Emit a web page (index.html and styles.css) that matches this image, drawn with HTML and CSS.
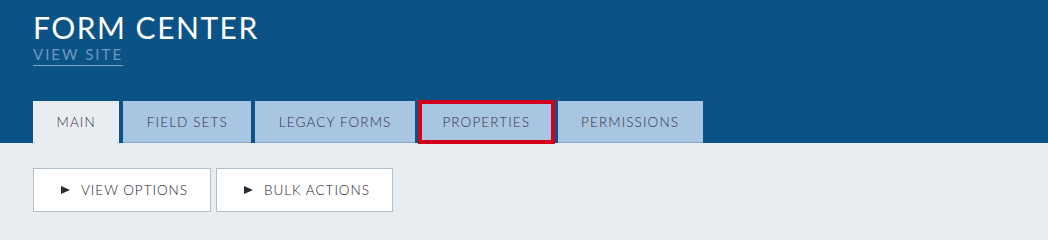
FILE: index.html
```html
<!DOCTYPE html>
<html>
<head>
<meta charset="utf-8">
<link rel="stylesheet" href="styles.css">
</head>
<body>
<header class="masthead">
  <h1 class="title">FORM CENTER</h1>
  <a class="view-site" href="#">VIEW SITE</a>
  <nav class="tabs">
    <a class="tab tab-active" href="#">MAIN</a>
    <a class="tab" href="#">FIELD SETS</a>
    <a class="tab" href="#">LEGACY FORMS</a>
    <a class="tab tab-highlight" href="#">PROPERTIES</a>
    <a class="tab" href="#">PERMISSIONS</a>
  </nav>
</header>
<main class="content">
  <button class="action"><svg class="arrow" width="9" height="8" viewBox="0 0 9 8"><polygon points="0,0 9,4 0,8" fill="#2a2a35"/></svg>VIEW OPTIONS</button>
  <button class="action"><svg class="arrow" width="9" height="8" viewBox="0 0 9 8"><polygon points="0,0 9,4 0,8" fill="#2a2a35"/></svg>BULK ACTIONS</button>
</main>
</body>
</html>
```
FILE: styles.css
```css
html, body {
  margin: 0;
  padding: 0;
}
body {
  background: #e8edf1;
  font-family: "Lato", "Open Sans", sans-serif;
  color: #333;
  overflow: hidden;
}
.masthead {
  background: #0b5387;
  padding: 10px 33px 0;
  display: flex;
  flex-direction: column;
  align-items: flex-start;
}
.title {
  margin: 0;
  font-weight: 400;
  font-size: 30px;
  line-height: 34px;
  letter-spacing: 1.5px;
  color: #ffffff;
}
.view-site {
  margin-top: 1px;
  font-size: 15px;
  line-height: 18px;
  letter-spacing: 2px;
  color: #6f97bd;
  text-decoration: none;
  border-bottom: 1px solid #7fa4c6;
  padding-bottom: 2px;
}
.tabs {
  display: flex;
  gap: 4px;
  margin-top: 35px;
}
.tab {
  height: 41px;
  padding: 0 23.5px;
  display: flex;
  align-items: center;
  justify-content: center;
  background: #a8c5e2;
  border-bottom: 1px solid #8ca6c4;
  font-size: 13.5px;
  font-weight: 300;
  letter-spacing: 1.12px;
  color: #33333f;
  text-decoration: none;
}
.tab-active {
  background: #e8edf1;
  border-bottom-color: #e8edf1;
}
.tab-highlight {
  outline: 4px solid #d0021b;
  outline-offset: -3px;
}
.content {
  display: flex;
  gap: 5px;
  padding: 25px 33px 0;
}
.action {
  height: 44px;
  padding: 0 22px 0 27px;
  display: flex;
  align-items: center;
  background: #ffffff;
  border: 1px solid #b3bfcd;
  font-family: "Lato", "Open Sans", sans-serif;
  font-size: 13.5px;
  font-weight: 300;
  letter-spacing: 0.98px;
  color: #22222c;
  cursor: pointer;
}
.arrow {
  margin-right: 11px;
  flex: none;
}
```
